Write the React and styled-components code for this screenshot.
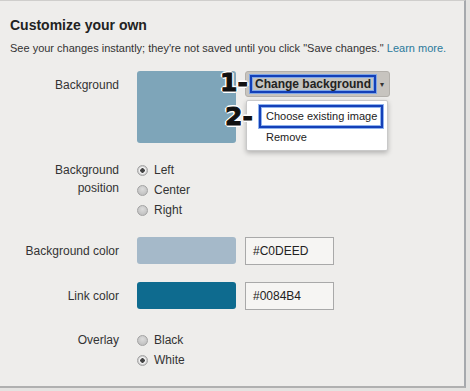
import React from "react";
import styled, { createGlobalStyle } from "styled-components";

const GlobalStyle = createGlobalStyle`
  html, body {
    margin: 0;
    padding: 0;
    background: #e4e3e1;
    font-family: "Liberation Sans", Arial, sans-serif;
  }
`;

const Panel = styled.div`
  width: 466px;
  height: 388px;
  background: #eeedeb;
  border-top: 1px solid #cfcecc;
  border-right: 2px solid #a6a9ad;
  border-bottom: 2px solid #b0b0b0;
  padding: 16px 0 0 10px;
  box-sizing: border-box;
  color: #333;
`;

const Title = styled.h2`
  margin: 0;
  font-size: 14px;
  line-height: 16px;
  font-weight: bold;
  color: #222;
`;

const Intro = styled.p`
  margin: 9px 0 0;
  font-size: 11px;
  line-height: 13px;
  color: #333;
`;

const Link = styled.a`
  color: #2b7a9b;
  text-decoration: none;
`;

const Form = styled.div`
  display: flex;
  flex-direction: column;
  margin-top: 16px;
`;

const Row = styled.div`
  display: grid;
  grid-template-columns: 109px auto;
  column-gap: 18px;
  align-items: ${(p) => (p.$center ? "center" : "start")};
  margin-top: ${(p) => p.$gap || 0}px;
`;

const Label = styled.div`
  text-align: right;
  font-size: 12px;
  line-height: 18px;
  padding-top: ${(p) => p.$pad || 0}px;
  color: #333;
`;

const Controls = styled.div`
  display: flex;
  align-items: flex-start;
  gap: 9px;
`;

const Swatch = styled.div`
  width: 99px;
  height: ${(p) => p.$h}px;
  background: ${(p) => p.$color};
  border-radius: 3px;
`;

const HexInput = styled.div`
  width: 89px;
  height: 28px;
  box-sizing: border-box;
  border: 1px solid #a9a9a9;
  background: #f6f5f3;
  font-size: 12px;
  line-height: 26px;
  padding-left: 7px;
  color: #222;
`;

const ButtonWrap = styled.div`
  position: relative;
`;

const DropButton = styled.div`
  width: 145px;
  height: 26px;
  box-sizing: border-box;
  background: #c7c4bf;
  border: 1px solid #b3b0ab;
  border-radius: 3px;
  display: flex;
  align-items: center;
  padding-left: 4px;
`;

const Highlight = styled.span`
  border: 2px solid #1440b8;
  box-shadow: 0 0 0 1px #7fa6e6, inset 0 0 0 1px #7fa6e6;
  padding: 0 3px;
  font-size: 12px;
  line-height: 14px;
  font-weight: bold;
  color: #222;
  background: #c3c3c0;
`;

const Caret = styled.span`
  margin-left: 4px;
  font-size: 8px;
  color: #333;
`;

const Menu = styled.div`
  position: absolute;
  top: 29px;
  left: 1px;
  width: 142px;
  height: 51px;
  box-sizing: border-box;
  background: #fff;
  border: 1px solid #c9c9c9;
  border-radius: 2px;
  box-shadow: 0 2px 5px rgba(0, 0, 0, 0.25);
  padding: 4px 0 0 12px;
`;

const MenuItem = styled.div`
  display: ${(p) => (p.$boxed ? "inline-block" : "block")};
  font-size: 11px;
  line-height: 13px;
  color: #222;
  white-space: nowrap;
  padding: ${(p) => (p.$boxed ? "3px 4px 3px 5px" : "0 0 0 7px")};
  margin-top: ${(p) => p.$gap || 0}px;
  border: ${(p) => (p.$boxed ? "2px solid #1440b8" : "none")};
  box-shadow: ${(p) =>
    p.$boxed ? "0 0 0 1px #8fb3ee, inset 0 0 0 1px #8fb3ee" : "none"};
`;

const Marker = styled.span`
  position: absolute;
  left: ${(p) => p.$x}px;
  top: ${(p) => p.$y}px;
  font-size: 25px;
  line-height: 25px;
  font-weight: bold;
  color: #111;
  font-family: "DejaVu Sans", sans-serif;
  -webkit-text-stroke: 1px #111;
  text-shadow: 0 0 2px #fff, 1px 1px 0 #fff, -1px -1px 0 #fff, 1px -1px 0 #fff,
    -1px 1px 0 #fff, 2px 0 0 #fff, -2px 0 0 #fff, 0 2px 0 #fff, 0 -2px 0 #fff;
`;

const RadioList = styled.div`
  display: flex;
  flex-direction: column;
`;

const RadioRow = styled.div`
  display: flex;
  align-items: center;
  height: 20px;
  font-size: 12px;
  color: #333;
  gap: 6px;
`;

const Radio = styled.span`
  width: 11px;
  height: 11px;
  box-sizing: border-box;
  border-radius: 50%;
  border: 1px solid #a3a3a3;
  background: ${(p) =>
    p.$on
      ? "radial-gradient(circle, #444 0 2px, #f4f4f4 2.5px 3px, #d0d0d0 4px)"
      : "radial-gradient(circle at 50% 35%, #dcdcdc, #b9b9b9)"};
`;

const RadioGroup = ({ options, selected }) => (
  <RadioList>
    {options.map((o) => (
      <RadioRow key={o}>
        <Radio $on={o === selected} />
        {o}
      </RadioRow>
    ))}
  </RadioList>
);

export default function App() {
  return (
    <>
      <GlobalStyle />
      <Panel>
        <Title>Customize your own</Title>
        <Intro>
          See your changes instantly; they're not saved until you click "Save
          changes." <Link>Learn more.</Link>
        </Intro>
        <Form>
          <Row>
            <Label $pad={5}>Background</Label>
            <Controls>
              <Swatch $h={72} $color="#7ea5b9" />
              <ButtonWrap>
                <DropButton>
                  <Highlight>Change background</Highlight>
                  <Caret>▾</Caret>
                </DropButton>
                <Menu>
                  <MenuItem $boxed>Choose existing image</MenuItem>
                  <MenuItem $gap={3}>Remove</MenuItem>
                </Menu>
                <Marker $x={-25} $y={-1}>1-</Marker>
                <Marker $x={-20} $y={33}>2-</Marker>
              </ButtonWrap>
            </Controls>
          </Row>
          <Row $gap={17}>
            <Label $pad={1}>
              Background
              <br />
              position
            </Label>
            <RadioGroup options={["Left", "Center", "Right"]} selected="Left" />
          </Row>
          <Row $gap={17} $center>
            <Label>Background color</Label>
            <Controls>
              <Swatch $h={27} $color="#a5b9c9" />
              <HexInput>#C0DEED</HexInput>
            </Controls>
          </Row>
          <Row $gap={17} $center>
            <Label>Link color</Label>
            <Controls>
              <Swatch $h={27} $color="#0e6b8f" />
              <HexInput>#0084B4</HexInput>
            </Controls>
          </Row>
          <Row $gap={20}>
            <Label $pad={1}>Overlay</Label>
            <RadioGroup options={["Black", "White"]} selected="White" />
          </Row>
        </Form>
      </Panel>
    </>
  );
}
